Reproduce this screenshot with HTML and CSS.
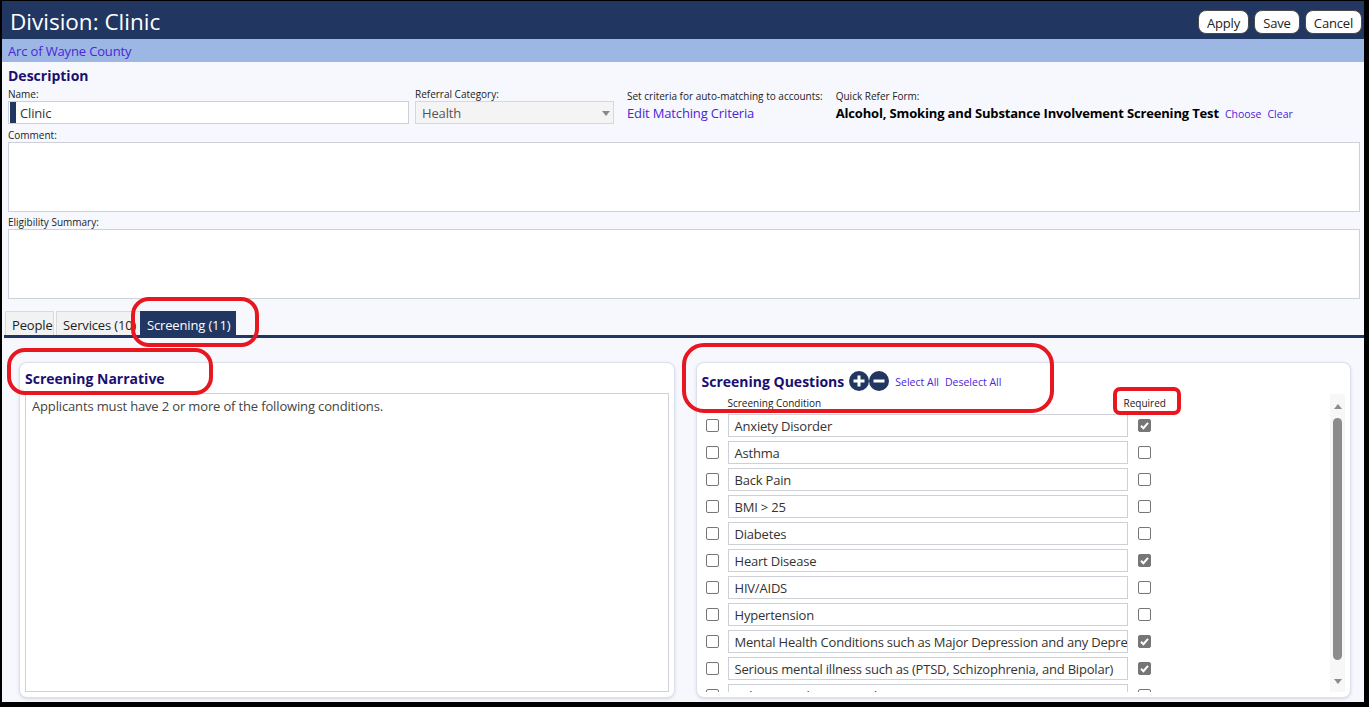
FILE: index.html
```html
<!DOCTYPE html>
<html>
<head>
<meta charset="utf-8">
<link rel="stylesheet" href="styles.css">
</head>
<body>
<div class="app">
  <header class="topbar">
    <h1 class="title">Division: Clinic</h1>
    <div class="actions">
      <button class="btn b-apply">Apply</button>
      <button class="btn b-save">Save</button>
      <button class="btn b-cancel">Cancel</button>
    </div>
  </header>
  <div class="subbar"><a class="link">Arc of Wayne County</a></div>
  <main class="content">
    <h2 class="section-title">Description</h2>
    <div class="fields">
      <div class="field f-name">
        <span class="lbl">Name:</span>
        <div class="input"><span class="stripe"></span>Clinic</div>
      </div>
      <div class="field f-cat">
        <span class="lbl">Referral Category:</span>
        <div class="input select">Health<span class="caret"></span></div>
      </div>
      <div class="field f-crit">
        <span class="lbl">Set criteria for auto-matching to accounts:</span>
        <a class="link biglink">Edit Matching Criteria</a>
      </div>
      <div class="field f-qr">
        <span class="lbl">Quick Refer Form:</span>
        <div class="qr-val"><b class="qr-name">Alcohol, Smoking and Substance Involvement Screening Test</b><a class="link small">Choose</a><a class="link small">Clear</a></div>
      </div>
    </div>
    <span class="lbl lbl-comment">Comment:</span>
    <div class="textbox"></div>
    <span class="lbl lbl-elig">Eligibility Summary:</span>
    <div class="textbox"></div>

    <nav class="tabs">
      <div class="tab t-people">People</div>
      <div class="tab t-services">Services (10)</div>
      <div class="tab t-screening active">Screening (11)</div>
    </nav>

    <div class="panels">
      <section class="panel">
        <h3 class="panel-title narr-title">Screening Narrative</h3>
        <div class="narrative">Applicants must have 2 or more of the following conditions.</div>
      </section>
      <section class="panel">
        <div class="q-head">
          <h3 class="panel-title">Screening Questions</h3>
          <span class="circ-btns">
            <svg class="circ" width="20" height="20" viewBox="0 0 20 20"><circle cx="10" cy="10" r="10" fill="#213761"/><path d="M4.5 10H15.5M10 4.5V15.5" stroke="#fff" stroke-width="3"/></svg>
            <svg class="circ minus" width="20" height="20" viewBox="0 0 20 20"><circle cx="10" cy="10" r="10" fill="#213761"/><path d="M4.5 10H15.5" stroke="#fff" stroke-width="3"/></svg>
          </span>
          <a class="link small sel">Select All</a>
          <a class="link small sel">Deselect All</a>
        </div>
        <div class="q-scroll">
          <div class="q-list">
            <div class="q-row q-colhead"><span></span><span class="lbl">Screening Condition</span><span class="lbl req-lbl">Required</span></div>
            <div class="q-row"><span class="cb"></span><div class="input q-input">Anxiety Disorder</div><span class="cb on"><svg width="13" height="13" viewBox="0 0 13 13"><path d="M3 6.8L5.4 9.2L10 3.8" fill="none" stroke="#fff" stroke-width="2"/></svg></span></div>
            <div class="q-row"><span class="cb"></span><div class="input q-input">Asthma</div><span class="cb"></span></div>
            <div class="q-row"><span class="cb"></span><div class="input q-input">Back Pain</div><span class="cb"></span></div>
            <div class="q-row"><span class="cb"></span><div class="input q-input">BMI &gt; 25</div><span class="cb"></span></div>
            <div class="q-row"><span class="cb"></span><div class="input q-input">Diabetes</div><span class="cb"></span></div>
            <div class="q-row"><span class="cb"></span><div class="input q-input">Heart Disease</div><span class="cb on"><svg width="13" height="13" viewBox="0 0 13 13"><path d="M3 6.8L5.4 9.2L10 3.8" fill="none" stroke="#fff" stroke-width="2"/></svg></span></div>
            <div class="q-row"><span class="cb"></span><div class="input q-input">HIV/AIDS</div><span class="cb"></span></div>
            <div class="q-row"><span class="cb"></span><div class="input q-input">Hypertension</div><span class="cb"></span></div>
            <div class="q-row"><span class="cb"></span><div class="input q-input">Mental Health Conditions such as Major Depression and any Depressive Disorder</div><span class="cb on"><svg width="13" height="13" viewBox="0 0 13 13"><path d="M3 6.8L5.4 9.2L10 3.8" fill="none" stroke="#fff" stroke-width="2"/></svg></span></div>
            <div class="q-row"><span class="cb"></span><div class="input q-input">Serious mental illness such as (PTSD, Schizophrenia, and Bipolar)</div><span class="cb on"><svg width="13" height="13" viewBox="0 0 13 13"><path d="M3 6.8L5.4 9.2L10 3.8" fill="none" stroke="#fff" stroke-width="2"/></svg></span></div>
            <div class="q-row"><span class="cb"></span><div class="input q-input">Substance Abuse Disorder</div><span class="cb"></span></div>
          </div>
          <div class="scrollbar">
            <span class="arrow up"></span>
            <span class="thumb"></span>
            <span class="sb-space"></span>
            <span class="arrow down"></span>
          </div>
        </div>
      </section>
    </div>
  </main>

  <div class="mark mark-tab"></div>
  <div class="mark mark-narr"></div>
  <div class="mark mark-q"></div>
  <div class="mark mark-req"></div>
</div>
</body>
</html>
```
FILE: styles.css
```css
* { box-sizing: border-box; }
html, body { margin: 0; height: 100%; }
body {
  background: #000;
  padding: 1px 5px 5px 2px;
  font-family: "Open Sans", "Noto Sans", sans-serif;
  color: #222;
}
.app {
  position: relative;
  height: 100%;
  background: #f6f8fd;
  display: flex;
  flex-direction: column;
  overflow: hidden;
}
.topbar {
  height: 38px;
  flex: none;
  background: #213761;
  display: flex;
  align-items: center;
  justify-content: space-between;
  padding: 0 2px 0 8px;
}
.title {
  margin: 0;
  color: #fff;
  font-weight: 400;
  font-size: 22.5px;
  line-height: 38px;
  padding-top: 3px;
}
.actions { display: flex; gap: 5px; margin-top: 3px; }
.btn {
  height: 24px;
  padding: 2px 0 0;
  background: #fff;
  border: 1px solid #4a4a4a;
  border-radius: 8px;
  font: 13px "Open Sans", sans-serif;
  letter-spacing: -0.15px;
  color: #222;
  text-align: center;
}
.b-apply { width: 51px; }
.b-save { width: 46px; }
.b-cancel { width: 57px; }
.subbar {
  height: 23px;
  flex: none;
  background: #9db7e5;
  padding: 2px 0 0 6px;
  line-height: 21px;
  font-size: 13px;
  letter-spacing: -0.15px;
}
.link { color: #4b25d8; text-decoration: none; }
.content {
  flex: 1;
  min-height: 0;
  display: flex;
  flex-direction: column;
  padding: 4px 4px 0 6px;
}
.section-title {
  margin: 0;
  font-size: 14px;
  font-weight: 700;
  color: #1a0f6f;
  line-height: 18px;
  padding-top: 1px;
}
.lbl {
  display: block;
  font-size: 10px;
  line-height: 13px;
  color: #222;
}
.fields { display: flex; margin-top: 3px; }
.f-name { width: 401px; }
.f-cat { width: 199px; margin-left: 6px; }
.f-crit { margin-left: 13px; padding-top: 2px; }
.f-qr { margin-left: 13px; padding-top: 2px; }
.input {
  height: 23px;
  border: 1px solid #cdd0d6;
  background: #fff;
  font-size: 13px;
  letter-spacing: -0.15px;
  line-height: 19px;
  padding-top: 2px;
  display: flex;
  align-items: center;
  white-space: nowrap;
  overflow: hidden;
  color: #333;
}
.stripe {
  width: 6px;
  height: 21px;
  background: #213761;
  margin: -2px 4px 0 1px;
  flex: none;
}
.select {
  position: relative;
  background: #f4f4f4;
  border-color: #d8d8d8;
  padding-left: 6px;
  color: #555;
}
.caret {
  position: absolute;
  right: 3px;
  top: 9px;
  border-left: 4px solid transparent;
  border-right: 4px solid transparent;
  border-top: 5px solid #888;
}
.biglink { display: block; font-size: 13px; line-height: 20px; letter-spacing: -0.15px; }
.qr-val { display: flex; align-items: baseline; line-height: 20px; }
.qr-name { font-size: 13px; color: #000; font-weight: 700; letter-spacing: -0.16px; }
.small { font-size: 10.5px; margin-left: 6px; }
.lbl-comment { margin-top: 5px; }
.lbl-elig { margin-top: 4px; }
.textbox {
  height: 70px;
  flex: none;
  background: #fff;
  border: 1px solid #cdd0d6;
}
.tabs {
  display: flex;
  margin: 12px -4px 0 -4px;
  padding-left: 1px;
  border-bottom: 3px solid #213761;
  flex: none;
}
.tab {
  height: 24px;
  line-height: 22px;
  padding: 2px 6px 0;
  font-size: 13px;
  letter-spacing: -0.15px;
  border: 1px solid #dadada;
  border-bottom: none;
  background: #f2f2f2;
  color: #222;
  white-space: nowrap;
}
.t-people { width: 49px; }
.t-services { width: 84px; margin-left: 2px; overflow: hidden; border-right: none; }
.t-screening { width: 96px; }
.tab.active { background: #213761; border-color: #213761; color: #fff; }
.panels {
  flex: 1;
  min-height: 0;
  display: flex;
  gap: 21px;
  margin-top: 24px;
  padding: 0 9px 4px 11px;
}
.panel {
  flex: 1;
  min-width: 0;
  background: #fff;
  border: 1px solid #dbe0ea;
  border-radius: 8px;
  box-shadow: 0 1px 3px rgba(40, 50, 90, 0.15);
  display: flex;
  flex-direction: column;
  padding: 5px;
}
.panel-title {
  margin: 0;
  font-size: 14px;
  font-weight: 700;
  color: #1a0f6f;
  line-height: 25px;
}
.narr-title { line-height: 21px; padding-bottom: 4px; }
.narrative {
  flex: 1;
  border: 1px solid #cfd2d8;
  padding: 3px 6px;
  font-size: 13px;
  letter-spacing: -0.15px;
  line-height: 18px;
  color: #444;
}
.q-head { display: flex; align-items: center; height: 26px; flex: none; }
.circ-btns { display: flex; margin-left: 5px; }
.circ { display: block; }
.sel { margin-left: 6px; margin-top: 2px; }
.q-scroll { flex: 1; min-height: 0; display: flex; }
.q-list {
  flex: 1;
  overflow: hidden;
  padding-top: 3px;
  display: flex;
  flex-direction: column;
  gap: 4px;
}
.q-row {
  display: grid;
  grid-template-columns: 26px 400px auto;
  align-items: center;
  flex: none;
}
.q-colhead { height: 13px; }
.req-lbl { margin-left: -4px; }
.cb {
  width: 13px;
  height: 13px;
  border: 1px solid #767676;
  border-radius: 2px;
  background: #fff;
  margin-left: 4px;
  display: block;
}
.q-row .cb:last-child { margin-left: 10px; }
.cb.on { background: #767676; border-color: #767676; position: relative; }
.cb.on svg { position: absolute; left: -1px; top: -1px; }
.q-input { padding-left: 6px; color: #333; letter-spacing: -0.2px; }
.scrollbar {
  width: 15px;
  flex: none;
  background: #f7f7f7;
  display: flex;
  flex-direction: column;
  align-items: center;
  padding: 10px 0 8px;
}
.arrow { width: 0; height: 0; border-left: 4px solid transparent; border-right: 4px solid transparent; }
.arrow.up { border-bottom: 5px solid #8c8c8c; }
.arrow.down { border-top: 5px solid #8c8c8c; }
.thumb { width: 9px; height: 242px; background: #8c8c8c; border-radius: 5px; margin-top: 9px; }
.sb-space { flex: 1; }
.mark {
  position: absolute;
  border: 4px solid #e8161f;
  border-radius: 18px;
  pointer-events: none;
}
.mark-tab { left: 129px; top: 296px; width: 128px; height: 50px; }
.mark-narr { left: 5px; top: 347px; width: 206px; height: 47px; }
.mark-q { left: 680px; top: 342px; width: 372px; height: 70px; border-radius: 22px; }
.mark-req { left: 1111px; top: 386px; width: 68px; height: 28px; border-radius: 7px; }
```
